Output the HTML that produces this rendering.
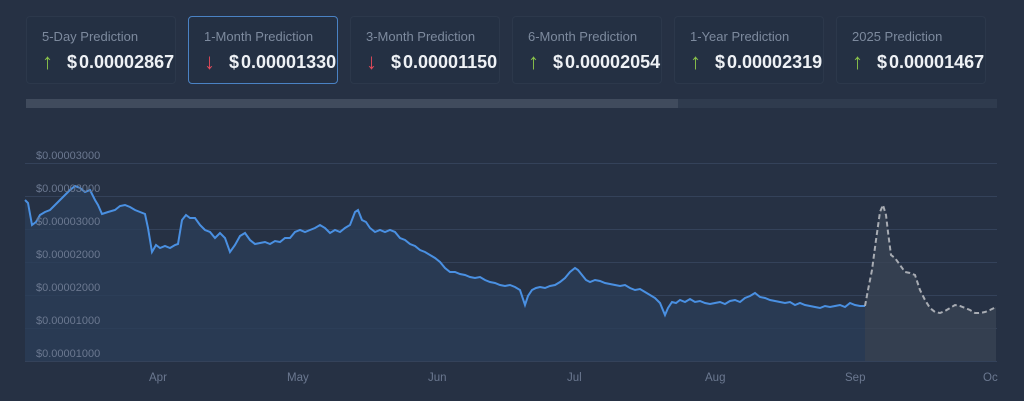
<!DOCTYPE html>
<html><head><meta charset="utf-8"><style>
body{margin:0;width:1024px;height:401px;background:#263144;font-family:"Liberation Sans",sans-serif;overflow:hidden;position:relative}
.card{position:absolute;top:16px;width:150px;height:68px;box-sizing:border-box;border:1px solid #2c384b;border-radius:4px;background:#243043}
.card.a{border-color:#4a82c4}
.t{position:absolute;left:15px;top:12px;font-size:13px;color:#7d8a9e}
.v{position:absolute;left:15px;top:34px;font-size:18px;font-weight:bold;color:#eef1f5;white-space:nowrap;line-height:22px}
.v span{display:inline-block;width:25px;font-weight:normal;font-size:22px;vertical-align:top}
.v b{margin-right:2px}
.up{color:#8bc34a}.dn{color:#e04a5a}
.lbl{position:absolute;left:36px;font-size:11px;color:#6b7890}
.x{position:absolute;top:372px;font-size:11.5px;color:#6b7890}
</style></head><body>
<div class="card" style="left:26px"><div class="t">5-Day Prediction</div><div class="v"><span class="up">↑</span><b>$</b>0.00002867</div></div>
<div class="card a" style="left:188px"><div class="t">1-Month Prediction</div><div class="v"><span class="dn">↓</span><b>$</b>0.00001330</div></div>
<div class="card" style="left:350px"><div class="t">3-Month Prediction</div><div class="v"><span class="dn">↓</span><b>$</b>0.00001150</div></div>
<div class="card" style="left:512px"><div class="t">6-Month Prediction</div><div class="v"><span class="up">↑</span><b>$</b>0.00002054</div></div>
<div class="card" style="left:674px"><div class="t">1-Year Prediction</div><div class="v"><span class="up">↑</span><b>$</b>0.00002319</div></div>
<div class="card" style="left:836px"><div class="t">2025 Prediction</div><div class="v"><span class="up">↑</span><b>$</b>0.00001467</div></div>
<div style="position:absolute;left:26px;top:99px;width:971px;height:9px;background:#2f3b4e"></div>
<div style="position:absolute;left:26px;top:99px;width:652px;height:9px;background:#404b5d"></div>
<svg style="position:absolute;left:0;top:0" width="1024" height="401">
<g stroke="#34425a" stroke-width="1">
<line x1="25" x2="997" y1="163.5" y2="163.5"/><line x1="25" x2="997" y1="196.5" y2="196.5"/><line x1="25" x2="997" y1="229.5" y2="229.5"/><line x1="25" x2="997" y1="262.5" y2="262.5"/><line x1="25" x2="997" y1="295.5" y2="295.5"/><line x1="25" x2="997" y1="328.5" y2="328.5"/><line x1="25" x2="997" y1="361.5" y2="361.5"/>
</g>
<polygon fill="#3a4454" fill-opacity="0.75" points="865,306 868,290 872,270 876,240 880,212 883,205 886,215 888,232 891,255 895,258 900,265 905,272 910,273 915,275 920,290 925,300 930,308 935,312 940,313 945,311 950,308 955,305 960,306 965,308 970,310 975,313 980,313 985,312 990,310 996,307 996,361 865,361"/>
<polygon fill="#2a3d58" fill-opacity="0.8" points="25,361 25,200 28,203 32,225 36,222 40,215 45,212 50,210 55,205 60,200 65,195 70,190 75,186 80,188 85,192 90,190 95,200 98,205 102,214 108,212 115,210 120,206 125,205 130,207 135,210 140,212 145,214 148,228 152,252 156,245 160,248 165,246 170,248 175,245 178,244 182,220 186,215 190,218 195,218 200,225 205,230 210,232 215,238 220,233 225,238 230,252 235,245 240,236 245,233 250,240 255,244 260,243 265,242 270,244 275,241 280,242 285,238 290,238 295,232 300,230 305,232 310,230 315,228 320,225 325,228 330,233 335,230 340,232 345,228 350,225 355,212 358,210 362,220 366,222 370,228 375,232 380,230 385,232 390,230 395,232 400,238 405,240 410,244 415,246 420,250 425,252 430,255 435,258 440,262 445,268 450,272 455,272 460,274 465,275 470,277 475,278 480,277 485,280 490,282 495,283 500,285 505,286 510,285 515,287 520,290 525,305 528,296 532,290 536,288 540,287 545,288 550,286 555,285 560,282 565,278 570,272 575,268 578,270 582,275 586,280 590,282 595,280 600,281 605,283 610,284 615,285 620,286 625,285 630,288 635,290 640,289 645,292 650,295 655,298 660,303 665,315 668,308 672,302 676,303 680,300 685,302 690,299 695,302 700,301 705,303 710,304 715,303 720,302 725,304 730,301 735,300 740,302 745,298 750,296 755,293 760,297 765,298 770,300 775,301 780,302 785,303 790,302 795,305 800,303 805,305 810,306 815,307 820,308 825,306 830,307 835,306 840,305 845,307 850,303 855,305 860,306 865,306 865,361"/>
<polyline fill="none" stroke="#4a90e2" stroke-width="2" points="25,200 28,203 32,225 36,222 40,215 45,212 50,210 55,205 60,200 65,195 70,190 75,186 80,188 85,192 90,190 95,200 98,205 102,214 108,212 115,210 120,206 125,205 130,207 135,210 140,212 145,214 148,228 152,252 156,245 160,248 165,246 170,248 175,245 178,244 182,220 186,215 190,218 195,218 200,225 205,230 210,232 215,238 220,233 225,238 230,252 235,245 240,236 245,233 250,240 255,244 260,243 265,242 270,244 275,241 280,242 285,238 290,238 295,232 300,230 305,232 310,230 315,228 320,225 325,228 330,233 335,230 340,232 345,228 350,225 355,212 358,210 362,220 366,222 370,228 375,232 380,230 385,232 390,230 395,232 400,238 405,240 410,244 415,246 420,250 425,252 430,255 435,258 440,262 445,268 450,272 455,272 460,274 465,275 470,277 475,278 480,277 485,280 490,282 495,283 500,285 505,286 510,285 515,287 520,290 525,305 528,296 532,290 536,288 540,287 545,288 550,286 555,285 560,282 565,278 570,272 575,268 578,270 582,275 586,280 590,282 595,280 600,281 605,283 610,284 615,285 620,286 625,285 630,288 635,290 640,289 645,292 650,295 655,298 660,303 665,315 668,308 672,302 676,303 680,300 685,302 690,299 695,302 700,301 705,303 710,304 715,303 720,302 725,304 730,301 735,300 740,302 745,298 750,296 755,293 760,297 765,298 770,300 775,301 780,302 785,303 790,302 795,305 800,303 805,305 810,306 815,307 820,308 825,306 830,307 835,306 840,305 845,307 850,303 855,305 860,306 865,306"/>
<polyline fill="none" stroke="#a8acb3" stroke-width="2" stroke-dasharray="5,3" points="865,306 868,290 872,270 876,240 880,212 883,205 886,215 888,232 891,255 895,258 900,265 905,272 910,273 915,275 920,290 925,300 930,308 935,312 940,313 945,311 950,308 955,305 960,306 965,308 970,310 975,313 980,313 985,312 990,310 996,307"/>
</svg>
<div class="lbl" style="top:150px">$0.00003000</div>
<div class="lbl" style="top:183px">$0.00003000</div>
<div class="lbl" style="top:216px">$0.00003000</div>
<div class="lbl" style="top:249px">$0.00002000</div>
<div class="lbl" style="top:282px">$0.00002000</div>
<div class="lbl" style="top:315px">$0.00001000</div>
<div class="lbl" style="top:348px">$0.00001000</div>
<div class="x" style="left:149px">Apr</div>
<div class="x" style="left:287px">May</div>
<div class="x" style="left:428px">Jun</div>
<div class="x" style="left:567px">Jul</div>
<div class="x" style="left:705px">Aug</div>
<div class="x" style="left:845px">Sep</div>
<div class="x" style="left:983px">Oc</div>
</body></html>
